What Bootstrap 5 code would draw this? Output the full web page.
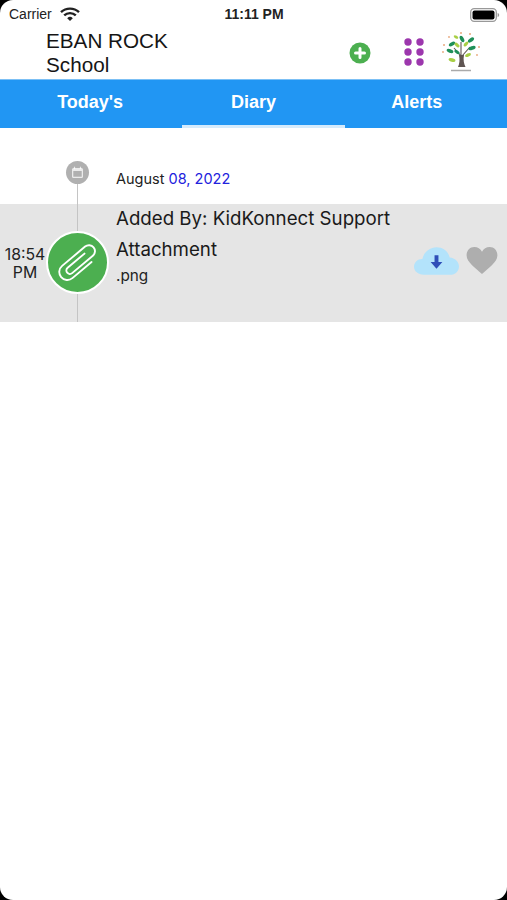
<!DOCTYPE html>
<html lang="en">
<head>
    <meta charset="UTF-8">
    <meta name="viewport" content="width=device-width, initial-scale=1.0">
    <title>Diary</title>
    <link href="https://cdn.jsdelivr.net/npm/bootstrap@5.3.0/dist/css/bootstrap.min.css" rel="stylesheet">
    <script src="https://cdn.jsdelivr.net/npm/bootstrap@5.3.0/dist/js/bootstrap.bundle.min.js"></script>
    <style>
        html, body { height: 100%; }
        body { background-color: #000; font-family: "Liberation Sans", Arial, sans-serif; color: #111; overflow: hidden; }
        .screen { height: 900px; background-color: #fff; border-radius: 13px; overflow: hidden; }

        /* status bar */
        .status-bar { height: 28px; padding: 0 9px 0 9px; color: #222; }
        .status-carrier { font-size: 14px; line-height: 28px; width: 200px; }
        .status-time { font-size: 14px; font-weight: 700; line-height: 28px; width: 90px; text-align: center; }
        .status-battery { margin-right: -2px; }

        /* header */
        .top-head { height: 51px; padding-left: 46px; }
        .school-name { font-size: 20.7px; line-height: 24px; width: 298px; margin-top: -1px; color: #151515; }
        .head-plus { width: 22px; height: 22px; margin-left: 5px; margin-top: -2px; }
        .head-grid { width: 20px; height: 28px; margin-left: 33px; margin-top: -3px; }
        .head-logo { width: 40px; height: 42px; margin-left: 17px; margin-top: -3px; }

        /* tabs */
        .tab-strip { height: 49px; padding: 0 8.5px; background-color: #2196f3; border-top: 1px solid #7cc0f5; position: relative; }
        .tab-item { flex: 1 1 0; text-align: center; color: #fff; font-size: 18px; font-weight: 700; line-height: 44px; }
        .tab-marker { position: absolute; left: 182px; bottom: 0; width: 163px; height: 3px; background-color: #d5ebfc; }

        /* timeline */
        .date-row { height: 76px; padding-left: 66px; padding-top: 33px; position: relative; }
        .date-dot { width: 23px; height: 23px; background-color: #b0b0b0; flex: none; }
        .date-text { line-height: 36px; margin-left: 27px; color: #222; font-family: "Inter", "Liberation Sans", sans-serif; font-size: 14.5px; }
        .date-blue { color: #2222dd; }
        .date-line { position: absolute; left: 77px; top: 56px; bottom: 0; width: 1px; background-color: #c4c4c4; }

        .entry-row { height: 118px; background-color: #e5e5e5; position: relative; }
        .entry-line { position: absolute; left: 77px; top: 0; bottom: 0; width: 1px; background-color: #c4c4c4; }
        .entry-time { width: 46px; flex: none; text-align: center; line-height: 18px; padding-top: 42px; margin-left: 2px; margin-right: -2px; font-family: "Inter", "Liberation Sans", sans-serif; font-size: 15.8px; color: #222; }
        .clip-badge { width: 63px; height: 63px; flex: none; background-color: #4caf50; border: 2.5px solid #fff; margin-top: 27px; position: relative; }
        .entry-body { padding-left: 7px; width: 298px; flex: none; font-family: "Inter", "Liberation Sans", sans-serif; }
        .entry-added { font-size: 18.7px; line-height: 30px; color: #1a1a1a; }
        .entry-title { font-size: 18.7px; line-height: 30px; margin-top: 1px; color: #1a1a1a; }
        .entry-ext { font-size: 15.3px; line-height: 22px; color: #222; }
        .cloud-ico { width: 45px; height: 30px; margin-top: 42px; margin-left: 7px; flex: none; }
        .heart-ico { width: 32px; height: 27px; margin-top: 43px; margin-left: 7px; flex: none; }
    </style>
</head>
<body>
    <div class="screen">
        <!-- status bar -->
        <div class="status-bar d-flex align-items-center">
            <div class="status-carrier d-flex align-items-center gap-1">
                <span>Carrier</span>
                <svg width="20" height="15" viewBox="0 0 20 15" class="ms-1">
                    <path d="M1 5.200a13 13 0 0 1 18 0" fill="none" stroke="#222" stroke-width="2.400"/>
                    <path d="M4.200 8.400a8.400 8.400 0 0 1 11.600 0" fill="none" stroke="#222" stroke-width="2.400"/>
                    <path d="M7.200 11.200a4 4 0 0 1 5.600 0L10 14z" fill="#222"/>
                </svg>
            </div>
            <div class="status-time">11:11 PM</div>
            <div class="status-battery ms-auto">
                <svg width="30" height="14" viewBox="0 0 30 14">
                    <rect x="0.700" y="0.700" width="25.600" height="12.600" rx="3.500" fill="none" stroke="#999" stroke-width="1.300"/>
                    <rect x="2.500" y="2.500" width="22" height="9" rx="2" fill="#000"/>
                    <path d="M27.600 5v4c1-.3 1.600-1 1.600-2s-.6-1.700-1.600-2z" fill="#999"/>
                </svg>
            </div>
        </div>

        <!-- header -->
        <div class="top-head d-flex align-items-center">
            <div class="school-name">EBAN ROCK<br>School</div>
            <svg class="head-plus" viewBox="0 0 22 22">
                <circle cx="11" cy="11" r="10.500" fill="#4caf50"/>
                <path d="M11 6.500v9M6.500 11h9" stroke="#fff" stroke-width="3" stroke-linecap="round"/>
            </svg>
            <svg class="head-grid" viewBox="0 0 20 28">
                <g fill="#9c37ad">
                    <circle cx="4" cy="4" r="3.700"/><circle cx="16" cy="4" r="3.700"/>
                    <circle cx="4" cy="14" r="3.700"/><circle cx="16" cy="14" r="3.700"/>
                    <circle cx="4" cy="24" r="3.700"/><circle cx="16" cy="24" r="3.700"/>
                </g>
            </svg>
            <svg class="head-logo" viewBox="0 0 40 42">
                <path d="M17 36c1.500-3 2-7 1-12h5c-1 5 0 9 1.500 12z" fill="#5f5552"/>
                <path d="M20 25l-7-8M21 25l8-9M20 24V11" stroke="#5f5552" stroke-width="1.100"/>
                <g fill="#1f8f58">
                    <ellipse cx="11" cy="13" rx="3.500" ry="1.800" transform="rotate(-30 11 13)"/>
                    <ellipse cx="21" cy="8" rx="3.500" ry="1.800" transform="rotate(60 21 8)"/>
                    <ellipse cx="31" cy="17" rx="3.800" ry="1.900" transform="rotate(-20 31 17)"/>
                    <ellipse cx="9" cy="20" rx="3.500" ry="1.800" transform="rotate(20 9 20)"/>
                    <ellipse cx="30" cy="9" rx="3.500" ry="1.800" transform="rotate(-35 30 9)"/>
                    <ellipse cx="16" cy="21" rx="3" ry="1.600" transform="rotate(35 16 21)"/>
                </g>
                <g fill="#a8cf45">
                    <ellipse cx="16" cy="14" rx="3" ry="1.600" transform="rotate(40 16 14)"/>
                    <ellipse cx="25" cy="13" rx="3" ry="1.600" transform="rotate(-50 25 13)"/>
                    <ellipse cx="11" cy="29" rx="3.500" ry="1.800" transform="rotate(15 11 29)"/>
                    <ellipse cx="15" cy="6" rx="2.500" ry="1.400" transform="rotate(30 15 6)"/>
                    <ellipse cx="27" cy="24" rx="3.200" ry="1.600" transform="rotate(-25 27 24)"/>
                </g>
                <g fill="#e8a77c">
                    <circle cx="3" cy="14" r="1"/><circle cx="38" cy="16" r="1"/><circle cx="20" cy="2" r="1"/>
                    <circle cx="29" cy="3" r="1"/><circle cx="8" cy="6" r="0.900"/><circle cx="2" cy="21" r="0.900"/><circle cx="36" cy="24" r="0.900"/>
                </g>
                <path d="M10 39.500h20" stroke="#aaa" stroke-width="1.400"/>
            </svg>
        </div>

        <!-- tabs -->
        <div class="tab-strip d-flex">
            <div class="tab-item">Today's</div>
            <div class="tab-item">Diary</div>
            <div class="tab-item">Alerts</div>
            <div class="tab-marker"></div>
        </div>

        <!-- date -->
        <div class="date-row d-flex align-items-start">
            <div class="date-line"></div>
            <div class="date-dot rounded-circle d-flex align-items-center justify-content-center">
                <svg width="13" height="13" viewBox="0 0 13 13">
                    <rect x="1" y="2" width="11" height="10" rx="1.500" fill="#fff" opacity=".75"/>
                    <rect x="2.300" y="5" width="8.400" height="5.700" fill="#b0b0b0"/>
                    <path d="M3.500 .8v2.400M9.500 .8v2.400" stroke="#fff" stroke-width="1.200" opacity=".75"/>
                </svg>
            </div>
            <div class="date-text">August <span class="date-blue">08, 2022</span></div>
        </div>

        <!-- diary entry -->
        <div class="entry-row d-flex">
            <div class="entry-line"></div>
            <div class="entry-time">18:54<br>PM</div>
            <div class="clip-badge rounded-circle d-flex align-items-center justify-content-center">
                <svg width="44" height="44" viewBox="0 0 44 44">
                    <path d="M34 8H9A8 8 0 0 1 9-8H39A6 6 0 0 1 39 4H12A3.500 3.500 0 0 1 12-3H34" fill="none" stroke="#fff" stroke-width="1.900" stroke-linecap="round" transform="translate(22 22) rotate(-40) translate(-23 0)"/>
                </svg>
            </div>
            <div class="entry-body">
                <div class="entry-added">Added By: KidKonnect Support</div>
                <div class="entry-title">Attachment</div>
                <div class="entry-ext">.png</div>
            </div>
            <svg class="cloud-ico" viewBox="0 0 46 30">
                <path d="M10 29C4 29 0 25.500 0 21s3.500-8 8.500-8C10 6 16 1 23 1c6.500 0 12 4 13.500 10.500C42 12 46 16 46 20.500 46 25.500 42 29 37 29z" fill="#b3e3fb"/>
                <path d="M21 9h4v7h4l-6 7-6-7h4z" fill="#2f4fb8"/>
            </svg>
            <svg class="heart-ico" viewBox="0 0 32 28">
                <path d="M16 28C10 22 0 16 0 8.500 0 3.500 3.500 0 8 0c3.500 0 6.500 1.800 8 5 1.500-3.200 4.500-5 8-5 4.500 0 8 3.500 8 8.500C32 16 22 22 16 28z" fill="#aeaeae"/>
            </svg>
        </div>
    </div>
</body>
</html>
